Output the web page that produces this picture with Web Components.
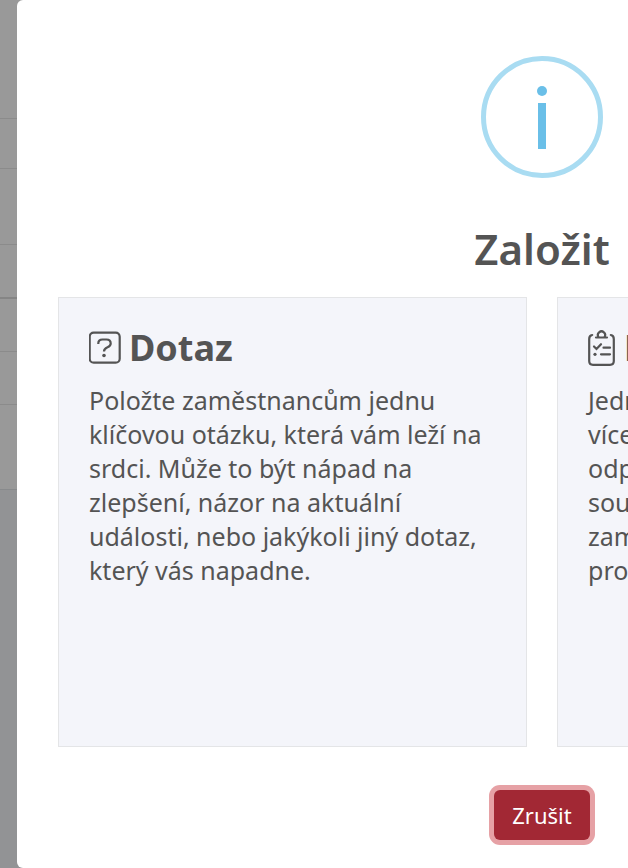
<!DOCTYPE html>
<html lang="cs">
<head>
<meta charset="utf-8">
<title>Založit</title>
<style>
    html, body{
        margin: 0;
        height: 100%;
    }
    body{
        font-family: "Noto Sans", "Open Sans", sans-serif;
        color: #545454;
        overflow: hidden;
    }
</style>
</head>
<body>
<app-page>
    <modal-dialog>
        <info-icon slot="icon"></info-icon>
        <span slot="title">Založit</span>
        <choice-card>
            <svg slot="icon" width="32" height="36" viewBox="0 0 32 36" fill="none" stroke="#545454" stroke-width="2.200" stroke-linecap="round" aria-hidden="true">
                <rect x="0.700" y="2.700" width="30" height="30" rx="4"/>
                <path d="M9.300 14V13.500Q9.300 9.500 13.500 9.500H17.500Q21.700 9.500 21.700 13.500Q21.700 16 18.500 17.300Q15 18.800 15 21.500" stroke-linecap="butt"/>
                <circle cx="15" cy="25.500" r="1.800" fill="#545454" stroke="none"/>
            </svg>
            <span slot="title">Dotaz</span>
            Položte zaměstnancům jednu klíčovou otázku, která vám leží na srdci. Může to být nápad na zlepšení, názor na aktuální události, nebo jakýkoli jiný dotaz, který vás napadne.
        </choice-card>
        <choice-card>
            <svg slot="icon" width="28" height="36" viewBox="0 0 28 36" fill="none" stroke="#545454" stroke-width="2.200" stroke-linecap="round" aria-hidden="true">
                <path d="M4.200 5Q1.200 5.500 1.200 9V31Q1.200 34.800 5 34.800H22Q25.800 34.800 25.800 31V9Q25.800 5.500 22.800 5"/>
                <path d="M8 7.500H19M10.500 7A3.600 3.600 0 1 1 16.500 7"/>
                <path d="M6 16.500L8.500 19L13 14.200M15.500 17.700H22M13 24.300H22"/>
                <circle cx="7" cy="24.300" r="1.600" fill="#545454" stroke="none"/>
            </svg>
            <span slot="title">Dotazník</span>
            Jednoduchý dotazník, který má<br>více otázek a nabízí různé<br>odpovědi. Zjistěte názory na<br>současné dění, spokojenost<br>zaměstnanců nebo nápady<br>pro zlepšení.
        </choice-card>
        <cancel-button slot="actions">Zrušit</cancel-button>
    </modal-dialog>
</app-page>

<script>
function makeTemplate(html) {
    const template = document.createElement('template')
    template.innerHTML = html
    return template
}

class BaseElement extends HTMLElement{
    constructor() {
        super();
        this.attachShadow({mode: 'open'})
        this.shadowRoot.appendChild(this.constructor.template.content.cloneNode(true))
    }
}

class AppPage extends BaseElement{
    static template = makeTemplate(`
<style>
    :host{
        display: block;
        position: relative;
        min-height: 100%;
        overflow: hidden;
        background: #929395;
    }
    .rows{
        position: absolute;
        inset: 0 0 auto 0;
        background: #999999;
    }
    .row{
        box-sizing: border-box;
        height: 53px;
        border-bottom: 1px solid #8b8b8b;
    }
    .head{ height: 119px; }
    .short{ height: 50px; }
    .tall{ height: 76px; }
    .thick{
        height: 54px;
        border-bottom: 2px solid #858585;
    }
    .last{
        height: 85px;
        border-color: #888a8c;
    }
    .overlay{
        position: relative;
        padding-left: 17px;
    }
</style>
<div class="rows">
    <div class="row head"></div>
    <div class="row short"></div>
    <div class="row tall"></div>
    <div class="row thick"></div>
    <div class="row"></div>
    <div class="row"></div>
    <div class="row last"></div>
</div>
<div class="overlay"><slot></slot></div>
`)
}

class ModalDialog extends BaseElement{
    static template = makeTemplate(`
<style>
    :host{
        display: block;
    }
    .modal{
        box-sizing: border-box;
        /* stays wide on small windows, the overflow is cut off */
        min-width: 1050px;
        padding: 56px 41px 28px;
        border-radius: 6px;
        background: #fff;
        display: flex;
        flex-direction: column;
        align-items: center;
    }
    h2{
        margin: 39px 0 17px;
        font-size: 42px;
        line-height: 63px;
        font-weight: 600;
    }
    .cards{
        align-self: stretch;
        display: grid;
        grid-template-columns: 1fr 1fr;
        gap: 30px;
    }
    .actions{
        margin-top: 43px;
    }
</style>
<div class="modal" role="dialog" aria-labelledby="title">
    <slot name="icon"></slot>
    <h2 id="title"><slot name="title"></slot></h2>
    <div class="cards"><slot></slot></div>
    <div class="actions"><slot name="actions"></slot></div>
</div>
`)
}

class InfoIcon extends BaseElement{
    static template = makeTemplate(`
<style>
    :host{
        display: block;
    }
    svg{
        display: block;
    }
</style>
<svg width="122" height="122" viewBox="0 0 122 122" aria-hidden="true">
    <circle cx="61" cy="61" r="58.500" fill="none" stroke="#a9dcf2" stroke-width="5"/>
    <circle cx="61" cy="35" r="5" fill="#6abfe8"/>
    <rect x="57" y="47" width="8" height="46" fill="#6abfe8"/>
</svg>
`)
}

class ChoiceCard extends BaseElement{
    static template = makeTemplate(`
<style>
    :host{
        display: block;
        box-sizing: border-box;
        min-height: 450px;
        padding: 23px 30px;
        border: 1px solid #e4e5e7;
        background: #f4f5fa;
    }
    h3{
        display: flex;
        align-items: center;
        gap: 8px;
        margin: 0 0 8px;
        font-size: 36px;
        line-height: 54px;
        font-weight: 700;
    }
    p{
        margin: 0;
        font-size: 25px;
        line-height: 34px;
    }
</style>
<h3><slot name="icon"></slot><slot name="title"></slot></h3>
<p><slot></slot></p>
`)
}

class CancelButton extends BaseElement{
    static template = makeTemplate(`
<style>
    :host{
        display: block;
    }
    button{
        display: block;
        padding: 8px 18px;
        border: 0;
        border-radius: 6px;
        background: #a22834;
        box-shadow: 0 0 0 5px #e6a1a5;
        color: #fff;
        font-family: inherit;
        font-size: 22px;
        line-height: 34px;
        cursor: pointer;
    }
</style>
<button type="button"><slot></slot></button>
`)
}

window.customElements.define("app-page", AppPage)
window.customElements.define("modal-dialog", ModalDialog)
window.customElements.define("info-icon", InfoIcon)
window.customElements.define("choice-card", ChoiceCard)
window.customElements.define("cancel-button", CancelButton)
</script>
</body>
</html>
